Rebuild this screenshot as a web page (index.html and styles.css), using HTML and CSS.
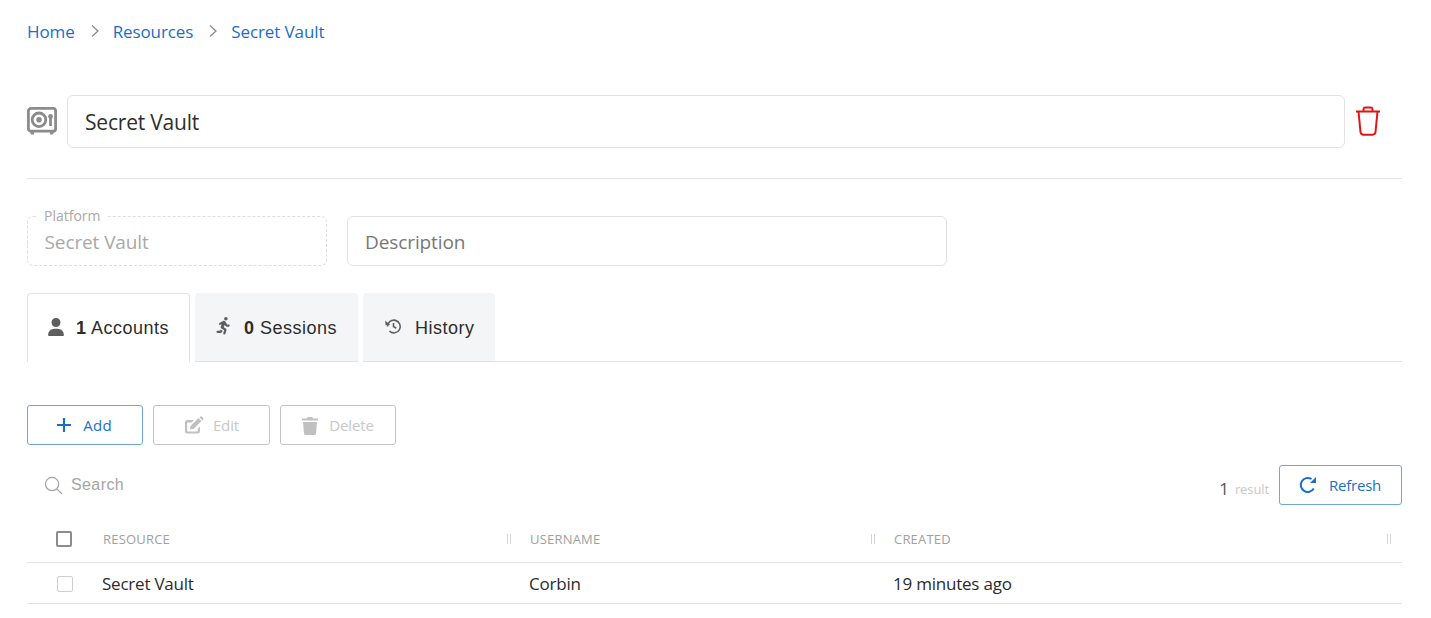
FILE: index.html
```html
<!DOCTYPE html>
<html lang="en">
<head>
<meta charset="utf-8">
<title>Secret Vault</title>
<link rel="stylesheet" href="styles.css">
</head>
<body>
<main class="page">
  <nav class="crumbs">
    <a class="crumb">Home</a>
    <svg class="chev" viewBox="0 0 10 14"><path d="M2 1.5 8 7l-6 5.500"/></svg>
    <a class="crumb">Resources</a>
    <svg class="chev" viewBox="0 0 10 14"><path d="M2 1.5 8 7l-6 5.500"/></svg>
    <a class="crumb">Secret Vault</a>
  </nav>

  <header class="title-row">
    <svg class="vault" viewBox="0 0 30 28">
      <rect x="1.400" y="1.400" width="27.200" height="22.800" rx="2.500" class="v-line"/>
      <circle cx="12" cy="12.800" r="6.800" class="v-line"/>
      <circle cx="12" cy="12.800" r="2.800" class="v-fill"/>
      <path d="M23.500 19v-8" class="v-line"/>
      <circle cx="23.500" cy="9.500" r="2.400" class="v-fill"/>
      <path d="M3 25h4v2.500H4zM23 25h4l-1 2.500h-3z" class="v-fill"/>
    </svg>
    <div class="title-box">Secret Vault</div>
    <svg class="trash-big" viewBox="0 0 26 30">
      <path d="M1 5.500h24M3.500 5.500 5.500 26q.3 2.700 3 2.700h9q2.700 0 3-2.700l2-20.500M8.500 5.500V3.500q0-2 2-2h5q2 0 2 2v2"/>
    </svg>
  </header>

  <hr class="rule">

  <section class="fields">
    <div class="field field-platform">
      <span class="field-label">Platform</span>
      <span class="field-value">Secret Vault</span>
    </div>
    <div class="field field-desc"><span class="field-hint">Description</span></div>
  </section>

  <div class="tabs">
    <div class="tab tab-on tab-a">
      <svg class="tab-icon" viewBox="0 0 448 512"><path d="M224 256a128 128 0 1 0 0-256 128 128 0 1 0 0 256zm-45.700 48C79.800 304 0 383.800 0 482.300 0 498.700 13.300 512 29.700 512h388.600c16.400 0 29.700-13.300 29.700-29.700C448 383.800 368.200 304 269.700 304z"/></svg>
      <span><b>1</b> Accounts</span>
    </div>
    <div class="tab tab-s">
      <svg class="tab-icon run" viewBox="0 0 416 512"><path d="M272 96a48 48 0 1 0 0-96 48 48 0 1 0 0 96zm-92 28c-12 0-23 3-33 9L101 160c-14 9-18 27-10 41s27 18 41 10l29-17-26 60c-9 21-1 46 18 58l73 44-24 79c-5 16 4 33 20 38s33-4 38-20l27-90c6-20-2-42-20-53l-52-31 27-68 15 27c8 14 23 23 39 23h50c17 0 30-13 30-30s-13-30-30-30h-41l-30-54c-14-25-40-43-70-43zM131 332 116 368H48c-17 0-30 13-30 30s13 30 30 30h79c20 0 38-12 46-30l12-28-13-8c-18-8-30-17-41-30z"/></svg>
      <span><b>0</b> Sessions</span>
    </div>
    <div class="tab tab-h">
      <svg class="tab-icon hist" viewBox="0 0 24 24"><path d="M4.500 12a8 8 0 1 1 2.500 5.800"/><path d="M12 7.500V12l3.500 2.200"/><path d="M1.500 4.500 2 10.500l6-.5z" class="solid"/></svg>
      <span>History</span>
    </div>
    <div class="tab-rest"></div>
  </div>

  <div class="actions">
    <button class="btn btn-add" type="button">
      <svg class="btn-icon" viewBox="0 0 16 16"><path d="M8 1v14M1 8h14"/></svg>
      <span>Add</span>
    </button>
    <button class="btn btn-off btn-edit" type="button">
      <svg class="off-icon" viewBox="0 0 20 19"><path d="M16 10.500V15q0 2.500-2.500 2.500h-10Q1 17.500 1 15V6.500Q1 4 3.500 4H10L7.500 6.500H4q-.8 0-.8 .8v7.400q0 .8.8.8h9q.8 0 .8-.8v-2z"/><path d="M6.500 10 14.500 2l3 3-8 8-3.500.5zM15.500 1l.8-.6q.8-.4 1.400.2l1.500 1.500q.6.800 0 1.400l-.9.900z"/></svg>
      <span>Edit</span>
    </button>
    <button class="btn btn-off btn-del" type="button">
      <svg class="off-icon del-icon" viewBox="0 0 16 19"><path d="M0 2.500h5l.6-1.500h4.800l.6 1.500h5V4.500H0zM1 6h14l-1 11.500q-.1 1.500-1.800 1.500H3.800Q2.100 19 2 17.500z"/></svg>
      <span>Delete</span>
    </button>
  </div>

  <div class="tools">
    <div class="search">
      <svg class="search-icon" viewBox="0 0 20 20"><circle cx="8.500" cy="8.500" r="7"/><path d="m13.500 13.500 5.500 5.500"/></svg>
      <span>Search</span>
    </div>
    <div class="tools-right">
      <span class="count">1</span>
      <span class="count-label">result</span>
      <button class="btn btn-refresh" type="button">
        <svg class="refresh-icon" viewBox="0 0 18 18"><path d="M14.800 12.500A7 7 0 1 1 12.500 3"/><path d="M17 1v6h-6z" class="solid"/></svg>
        <span>Refresh</span>
      </button>
    </div>
  </div>

  <div class="table">
    <div class="row head">
      <div class="cell c-check"><span class="box box-head"></span></div>
      <div class="cell c-res">RESOURCE<i class="grip"></i></div>
      <div class="cell c-user">USERNAME<i class="grip"></i></div>
      <div class="cell c-made">CREATED<i class="grip"></i></div>
    </div>
    <div class="row body">
      <div class="cell c-check"><span class="box"></span></div>
      <div class="cell c-res">Secret Vault</div>
      <div class="cell c-user">Corbin</div>
      <div class="cell c-made">19 minutes ago</div>
    </div>
  </div>
</main>
</body>
</html>
```

FILE: styles.css
```css
* { box-sizing: border-box; }
html, body { margin: 0; background: #fff; }
body { font-family: "Open Sans", "Noto Sans", sans-serif; color: #2b2b2b; height: 618px; overflow: hidden; }
.page { padding: 0 29px 0 27px; }

.crumbs { display: flex; align-items: center; height: 62px; font-size: 17px; }
.crumb { color: #1a6fc4; letter-spacing: -.1px; }
.chev { width: 10px; height: 14px; margin: 0 13px 0 15px; fill: none; stroke: #8a8a8a; stroke-width: 1.300; }

.title-row { display: flex; align-items: center; margin-top: 33px; height: 53px; }
.vault { width: 30px; height: 28px; flex: none; margin-right: 10px; margin-top: -2px; }
.v-line { fill: none; stroke: #8c8c8c; stroke-width: 2.800; }
.v-fill { fill: #8c8c8c; }
.title-box { width: 1278px; height: 53px; border: 1px solid #e3e3e3; border-radius: 6px; padding: 0 17px; display: flex; align-items: center; font-size: 21px; letter-spacing: -.2px; color: #2e2e2e; flex: none; }
.trash-big { width: 26px; height: 30px; margin-left: 10px; margin-top: -2px; fill: none; stroke: #e01515; stroke-width: 2; flex: none; }

.rule { margin: 30px 0 0; border: 0; border-top: 1px solid #e3e3e3; }

.fields { display: flex; gap: 20px; margin-top: 37px; }
.field { height: 50px; border-radius: 6px; position: relative; display: flex; align-items: center; padding: 2px 17px 0 17px; font-size: 19px; letter-spacing: -.1px; }
.field-platform { width: 300px; border: 1px dashed #dedede; color: #a8a8a8; padding-left: 16.500px; }
.field-desc { width: 600px; border: 1px solid #e3e3e3; color: #777; }
.field-label { position: absolute; left: 10px; top: -10px; background: #fff; padding: 0 6px; font-size: 14px; line-height: 18px; color: #a8a8a8; letter-spacing: 0; }

.tabs { display: flex; margin-top: 27px; height: 69px; font-family: "Liberation Sans", Arial, sans-serif; font-size: 18px; color: #2d2d2d; letter-spacing: .5px; }
.tab { display: flex; align-items: center; padding-top: 2px; padding-left: 20px; background: #f3f5f7; border-bottom: 1px solid #e3e3e3; border-radius: 4px 4px 0 0; margin-right: 5px; height: 69px; }
.tab-a { width: 163px; }
.tab-s { width: 163px; padding-left: 20px; }
.tab-h { width: 132px; padding-left: 21px; margin-right: 0; }
.tab-on { background: #fff; border: 1px solid #e3e3e3; border-bottom: 0; padding-top: 0; padding-left: 20px; }
.tab-rest { flex: 1; border-bottom: 1px solid #e3e3e3; }
.tab b { font-weight: 700; }
.tab-icon { width: 16px; height: 18px; fill: #5e5e5e; margin-right: 12px; margin-top: -3px; flex: none; }
.run { width: 17px; height: 19px; margin-right: 12px; }
.hist { width: 19px; height: 19px; fill: none; stroke: #5e5e5e; stroke-width: 2; margin-right: 12px; }
.solid { fill: #5e5e5e; stroke: none; }

.actions { display: flex; gap: 10px; margin-top: 43px; }
.btn { height: 40px; border-radius: 3px; border: 1px solid #6ea8d8; background: #fff; display: flex; align-items: center; justify-content: center; font-family: "Open Sans", "Noto Sans", sans-serif; font-size: 15px; letter-spacing: -.2px; padding: 0; color: #1a6fc4; }
.btn-add { width: 116px; letter-spacing: .3px; padding-right: 2px; }
.btn-add .btn-icon { width: 16px; height: 16px; fill: none; stroke: #1a6fc4; stroke-width: 2.200; margin-right: 11px; }
.btn-off { border-color: #c4c4c4; color: #c8c8c8; letter-spacing: -.1px; }
.btn-edit { width: 117px; }
.btn-del { width: 116px; }
.off-icon { width: 20px; height: 19px; fill: #c0c0c0; margin-right: 9px; }
.del-icon { width: 16px; margin-right: 11px; }

.tools { display: flex; justify-content: space-between; align-items: flex-start; margin-top: 20px; height: 40px; }
.search { display: flex; align-items: center; height: 40px; padding-left: 17px; font-family: "Liberation Sans", Arial, sans-serif; font-size: 16px; letter-spacing: .4px; color: #a5a5a5; }
.search-icon { width: 19px; height: 19px; fill: none; stroke: #a5a5a5; stroke-width: 1.300; margin-right: 8px; margin-top: 1px; }
.tools-right { display: flex; align-items: center; height: 40px; }
.count { font-size: 17px; color: #555; margin-top: 6px; }
.count-label { font-size: 13px; letter-spacing: -.1px; color: #c8c8c8; margin: 8px 10px 0 6px; }
.btn-refresh { width: 123px; padding-right: 1px; }
.refresh-icon { width: 18px; height: 18px; fill: none; stroke: #1a6fc4; stroke-width: 2; margin-right: 12px; }
.refresh-icon .solid { fill: #1a6fc4; }

.table { margin-top: 14px; }
.row { display: flex; align-items: center; border-bottom: 1px solid #e3e3e3; }
.head { height: 44px; font-size: 13px; letter-spacing: .2px; color: #a0a0a0; padding-bottom: 3px; }
.body { height: 41px; font-size: 17px; color: #2b2b2b; letter-spacing: -.22px; padding-top: 1px; }
.cell { position: relative; display: flex; align-items: center; height: 100%; }
.c-check { width: 75px; padding-left: 30px; }
.c-res { width: 427px; }
.c-user { width: 364px; }
.c-made { flex: 1; }
.head .c-res, .head .c-user, .head .c-made { padding-left: 1px; }
.box { width: 16px; height: 16px; border: 1.500px solid #cfcfcf; border-radius: 2px; display: block; }
.box-head { border: 2px solid #8c8c8c; width: 16px; height: 16px; margin-left: -1px; }
.grip { position: absolute; right: 0; top: 50%; margin-top: -5px; width: 4px; height: 10px; border-left: 1px solid #d4d4d4; border-right: 1px solid #d4d4d4; }
.c-res .grip { right: 18px; }
.c-user .grip { right: 18px; }
.c-made .grip { right: 11px; }
```
